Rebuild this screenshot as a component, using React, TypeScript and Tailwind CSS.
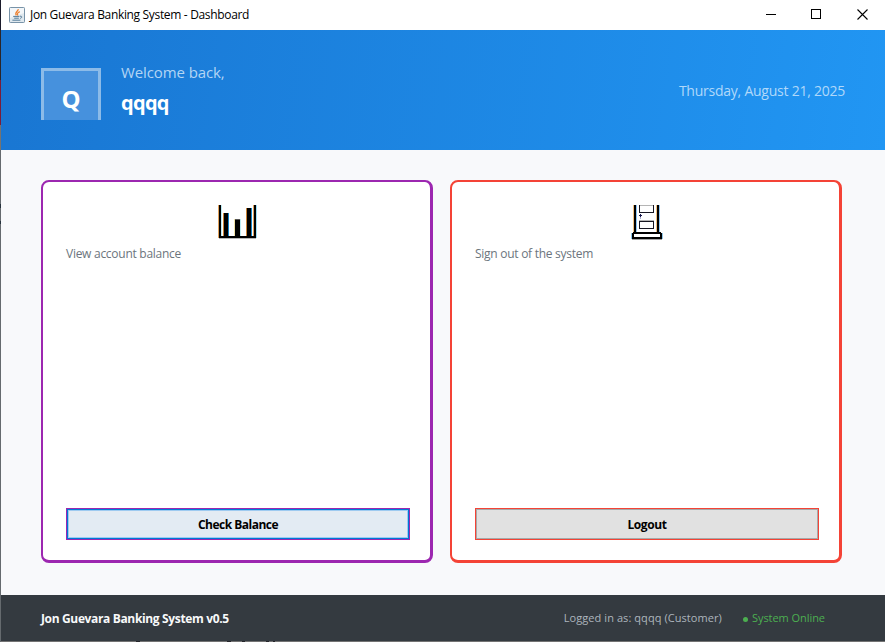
import type { ReactNode } from "react";

function JavaIcon() {
  return (
    <svg width="16" height="16" viewBox="0 0 16 16" fill="none">
      <rect x="0.5" y="0.5" width="15" height="15" rx="0.8" fill="#dfe8ee" stroke="#7893a8" />
      <path d="M1 1h14v5L1 11z" fill="#f2f6f9" />
      <path d="M9.2 2.2C9.6 4.2 5.2 5 7.3 8.4M10.8 4.6C8.2 5.8 8 6.6 8.8 8.4" stroke="#ee8130" strokeWidth="1.3" />
      <path d="M4.2 9.4h6.2M5.2 11.2h4.6M3.4 13.2h8M11 9.2c2.2-.4 2.4 1.6.2 2.2" stroke="#557b98" strokeWidth="1" />
    </svg>
  );
}

function ChartIcon() {
  return (
    <svg width="40" height="35" viewBox="0 0 40 35" shapeRendering="crispEdges">
      <path d="M0 0h1v33H0zM35 0h1v31h-1z" fill="#e0a25c" />
      <path d="M5 8h1v23H5zM28 3h1v28h-1z" fill="#c98235" />
      <path d="M10 8h1v23h-1zM33 3h1v28h-1z" fill="#1683c4" />
      <path d="M16 14h1v17h-1z" fill="#eee1a8" />
      <path d="M22 14h1v17h-1zM3 0h1v31H3z" fill="#bdebf3" />
      <path d="M1 33h37v1H1z" fill="#b7b7b7" />
      <path d="M1 0h2v31h33V0h2v33H1z" fill="#000" />
      <path d="M6 8h4v23H6zM17 15h5v16h-5zM29 3h4v28h-4z" fill="#000" />
      <path d="M17 14h5v1h-5z" fill="#555" />
      <path d="M38 0h1v33h-1z" fill="#9fe0f7" />
    </svg>
  );
}

function DoorIcon() {
  return (
    <svg width="32" height="35" viewBox="0 0 32 35" shapeRendering="crispEdges">
      <path d="M2 0h1v27H2zM25 0h1v27h-1z" fill="#efc080" />
      <path d="M3 0h2v27H3zM26 0h2v27h-2z" fill="#000" />
      <path d="M5 0h1v27H5zM28 0h1v27h-1z" fill="#8ec6f6" />
      <path d="M8 0h1v8H8zM22 0h1v8h-1zM8 7h15v1H8zM8 16h15v1H8zM8 23h15v1H8zM8 16h1v8H8zM22 16h1v8h-1z" fill="#171722" />
      <path d="M9 0h13v1H9zM8 15h15v1H8z" fill="#b5b5b5" />
      <path d="M8 10h3v1H8zM9 9h1v3H9z" fill="#15154b" />
      <path d="M9 12h1v2H9z" fill="#a9adcc" />
      <path d="M2 27h28v1H2zM1 28h30v6H1z" fill="#000" />
      <path d="M3 29h26v3H3z" fill="#fff" />
      <path d="M1 34h30v1H1z" fill="#a4a4a4" />
      <path d="M0 28h1v6H0zM31 28h1v6h-1z" fill="#8ec6e8" />
    </svg>
  );
}

function TitleBar() {
  return (
    <header className="flex h-[30px] items-center bg-white pl-[8px]">
      <JavaIcon />
      <span className="ml-[5px] text-[12px] leading-[16px] tracking-[-0.33px] text-black">Jon Guevara Banking System - Dashboard</span>
      <svg className="ml-auto mr-[16px]" width="103" height="12" viewBox="0 0 103 12" fill="none" stroke="#000">
        <path d="M0 5.5h10M45.5.5h9v9h-9z" shapeRendering="crispEdges" />
        <path d="m91.5.5 10 10m0-10-10 10" strokeWidth="1.1" />
      </svg>
    </header>
  );
}

type CardProps = { icon: ReactNode; description: string; frame: string; children: ReactNode };

function Card({ icon, description, frame, children }: CardProps) {
  return (
    <section className={`flex h-[383px] w-[392px] flex-col rounded-[8px] border-t-2 border-r-[3px] border-b-[3px] border-l-2 bg-white pt-[23px] pr-[20px] pb-[20px] pl-[23px] ${frame}`}>
      <div className="flex h-[35px] justify-center">{icon}</div>
      <p className="mt-[6px] text-[12px] leading-[16px] tracking-[-0.27px] text-[#6c757d]">{description}</p>
      {children}
    </section>
  );
}

export default function App() {
  return (
    <div className="flex h-[642px] w-[885px] overflow-hidden font-['Open_Sans','Noto_Sans',sans-serif]">
      <div className="w-px bg-[linear-gradient(#1b1b2b_0_30px,#2b2528_30px_80px,#7a1c39_80px_125px,#77736f_125px_150px,#656a6e_150px_204px,#26323c_204px_208px,#656a6e_208px_221px,#26323c_221px_224px,#656a6e_224px)]" />
      <div className="flex w-[884px] flex-col bg-[#f8f9fb]">
        <TitleBar />
        <div className="flex h-[120px] bg-[linear-gradient(98deg,#1976d2,#2196f3)] px-[40px]">
          <div className="mt-[38px] flex h-[52px] w-[60px] justify-center border-x-[3px] border-t-[3px] border-[#8cbbe8] bg-[#4691dd]">
            <span className="pt-[11px] text-[24px] leading-[34px] font-bold text-white">Q</span>
          </div>
          <div className="ml-[20px] pt-[32px]">
            <p className="text-[15px] leading-[20px] tracking-[-0.1px] text-[#b3d5f4]">Welcome back,</p>
            <p className="mt-[7px] text-[20px] leading-[28px] font-bold tracking-[-0.7px] text-white">qqqq</p>
          </div>
          <p className="mt-[51px] ml-auto text-[14px] leading-[20px] tracking-[-0.24px] text-[#b0d8fa]">Thursday, August 21, 2025</p>
        </div>
        <main className="flex h-[445px] gap-[17px] pt-[30px] pl-[40px]">
          <Card icon={<ChartIcon />} description="View account balance" frame="border-[#9c27b0]">
            <button className="mt-auto h-[32px] w-[344px] border border-[#9c27b0] text-[12px] font-bold tracking-[-0.5px] text-black">
              <span className="flex h-full items-center justify-center border border-[#0078d7] bg-[#e3ebf3] pt-[2px] shadow-[inset_0_0_0_1px_#9ecaf0]">Check Balance</span>
            </button>
          </Card>
          <Card icon={<DoorIcon />} description="Sign out of the system" frame="border-[#f44336]">
            <button className="mt-auto h-[32px] w-[344px] border border-[#f44336] text-[12px] font-bold tracking-[-0.4px] text-black">
              <span className="flex h-full items-center justify-center border border-[#a6a9a9] bg-[#e1e1e1] pt-[2px]">Logout</span>
            </button>
          </Card>
        </main>
        <footer className="flex h-[46px] items-center bg-[#343a40] pr-[60px] pl-[40px] leading-[16px]">
          <strong className="pt-[2px] text-[12px] tracking-[-0.35px] text-[#f8f9fa]">Jon Guevara Banking System v0.5</strong>
          <span className="ml-auto text-[11px] tracking-[0.07px] text-[#adb5bd]">Logged in as: qqqq (Customer)</span>
          <span className="mt-[3px] mr-[4px] ml-[21px] size-[5px] rounded-full bg-[#4caf50]" />
          <span className="text-[11px] tracking-[-0.05px] text-[#4caf50]">System Online</span>
        </footer>
        <div className="h-px bg-[linear-gradient(90deg,#737373_0_135px,#26262b_135px_139px,#737373_139px_226px,#26262b_226px_230px,#737373_230px_241px,#26262b_241px_244px,#737373_244px_265px,#26262b_265px_268px,#737373_268px_272px,#26262b_272px_274px,#737373_274px)]" />
      </div>
    </div>
  );
}
